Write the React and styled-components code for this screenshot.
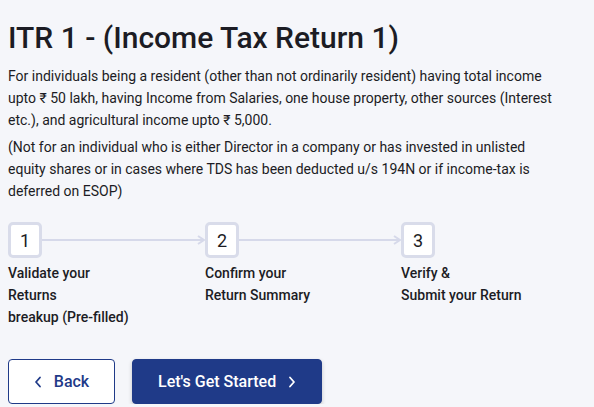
import React from 'react'
import styled, { createGlobalStyle } from 'styled-components'

const GlobalStyle = createGlobalStyle`
  body {
    margin: 0;
    background: #f5f6fa;
    font-family: Roboto, "Noto Sans", sans-serif;
    color: #1c1c24;
  }
`

const steps = [
  { num: 1, label: ['Validate your', 'Returns', 'breakup (Pre-filled)'] },
  { num: 2, label: ['Confirm your', 'Return Summary'] },
  { num: 3, label: ['Verify &', 'Submit your Return'] },
]

function Chevron({ dir }) {
  return (
    <svg width="8" height="12" viewBox="0 0 8 12" fill="none">
      <path
        d={dir === 'left' ? 'M6 1.5 L2 6 L6 10.5' : 'M2 1.5 L6 6 L2 10.5'}
        stroke="currentColor"
        strokeWidth="1.8"
        strokeLinecap="round"
        strokeLinejoin="round"
      />
    </svg>
  )
}

function App() {
  return (
    <Page>
      <GlobalStyle />
      <Title>ITR 1 - (Income Tax Return 1)</Title>
      <Para>
        For individuals being a resident (other than not ordinarily resident) having total income
        upto ₹ 50 lakh, having Income from Salaries, one house property, other sources (Interest
        etc.), and agricultural income upto ₹ 5,000.
      </Para>
      <Para>
        (Not for an individual who is either Director in a company or has invested in unlisted
        equity shares or in cases where TDS has been deducted u/s 194N or if income-tax is
        deferred on ESOP)
      </Para>

      <Steps>
        {steps.map((s, i) => (
          <Step key={s.num}>
            <StepTop>
              <StepBox>{s.num}</StepBox>
              {i < steps.length - 1 && (
                <Arrow>
                  <svg width="8" height="10" viewBox="0 0 8 10">
                    <path d="M1 1 L7 5 L1 9" stroke="#d6d9ea" strokeWidth="2" fill="none" />
                  </svg>
                </Arrow>
              )}
            </StepTop>
            <StepLabel>
              {s.label.map(l => (
                <div key={l}>{l}</div>
              ))}
            </StepLabel>
          </Step>
        ))}
      </Steps>

      <Actions>
        <Button>
          <Chevron dir="left" />
          <span>Back</span>
        </Button>
        <Button primary>
          <span>Let's Get Started</span>
          <Chevron dir="right" />
        </Button>
      </Actions>
    </Page>
  )
}

const Page = styled.div`
  padding: 19px 8px 0 8px;
`

const Title = styled.h1`
  margin: 0 0 8px 0;
  font-size: 30px;
  font-weight: 500;
  line-height: 38px;
  color: #1c1c24;
`

const Para = styled.p`
  margin: 0 0 5px 0;
  font-size: 14px;
  line-height: 22px;
  color: #1c1c24;
  max-width: 555px;
`

const Steps = styled.div`
  display: grid;
  grid-template-columns: 197px 196px 1fr;
  margin-top: 20px;
`

const Step = styled.div`
  display: flex;
  flex-direction: column;
`

const StepTop = styled.div`
  display: flex;
  align-items: center;
`

const StepBox = styled.div`
  box-sizing: border-box;
  width: 34px;
  height: 36px;
  border: 3px solid #d9dcea;
  border-radius: 5px;
  background: #ffffff;
  display: flex;
  align-items: center;
  justify-content: center;
  font-size: 18px;
  font-weight: 400;
  color: #1c1c24;
  flex-shrink: 0;
`

const Arrow = styled.div`
  flex: 1;
  height: 2px;
  background: #d6d9ea;
  margin-right: 2px;
  position: relative;
  svg {
    position: absolute;
    right: -2px;
    top: -4px;
  }
`

const StepLabel = styled.div`
  margin-top: 4px;
  font-size: 14px;
  line-height: 22px;
  font-weight: 500;
  color: #1c1c24;
`

const Actions = styled.div`
  display: flex;
  gap: 17px;
  margin-top: 31px;
`

const Button = styled.button`
  box-sizing: border-box;
  height: 45px;
  padding: 0 ${p => (p.primary ? '25px' : '24px')};
  min-width: ${p => (p.primary ? '189px' : '107px')};
  display: flex;
  align-items: center;
  justify-content: center;
  gap: 12px;
  border-radius: 4px;
  font-family: Roboto, sans-serif;
  font-size: 16px;
  font-weight: 500;
  border: 1px solid #1f3a88;
  background: ${p => (p.primary ? '#1f3a88' : '#ffffff')};
  color: ${p => (p.primary ? '#ffffff' : '#1f3a88')};
  box-shadow: ${p => (p.primary ? '0 2px 4px rgba(0,0,0,0.2)' : 'none')};
  cursor: pointer;
`

export default App
